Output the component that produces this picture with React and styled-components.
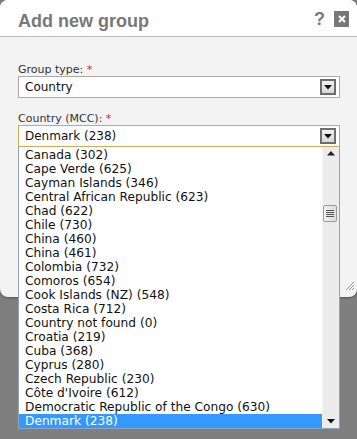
import React from "react";
import styled, { createGlobalStyle } from "styled-components";

const GlobalStyle = createGlobalStyle`
  html, body {
    margin: 0;
    padding: 0;
    background: #7f7f7f;
  }
  body {
    font-family: "DejaVu Sans", Verdana, sans-serif;
  }
`;

const Page = styled.div`
  width: 357px;
  height: 439px;
  overflow: visible;
  background: #7f7f7f;
`;

const Dialog = styled.div`
  position: relative;
  width: 357px;
  height: 297px;
  background: #f3f3f3;
  border-radius: 8px;
  box-shadow: 0 1px 3px rgba(0, 0, 0, 0.35);
`;

const Header = styled.div`
  height: 37px;
  box-sizing: border-box;
  padding: 7px 8px 0 18px;
  background: #fff;
  border-radius: 8px 8px 0 0;
  border-bottom: 1px solid #bcbcbc;
  display: flex;
  align-items: flex-start;
`;

const Title = styled.h1`
  margin: 4px 0 0;
  flex: 1;
  font-family: "Liberation Sans", Arial, sans-serif;
  font-size: 18px;
  line-height: 20px;
  font-weight: bold;
  color: #787878;
`;

const Tools = styled.div`
  display: flex;
  align-items: center;
  gap: 9px;
  padding-top: 4px;
`;

const Help = styled.span`
  font-family: "Liberation Sans", Arial, sans-serif;
  font-weight: bold;
  font-size: 18px;
  line-height: 16px;
  color: #7a7a7a;
`;

const Close = styled.span`
  width: 15px;
  height: 16px;
  background: #777;
  display: flex;
  align-items: center;
  justify-content: center;
`;

const Body = styled.div`
  padding: 27px 17px 0 18px;
`;

const Label = styled.div`
  font-size: 11px;
  line-height: 12px;
  color: #333;
  margin-top: ${(p) => (p.$first ? "0" : "15px")};
`;

const Req = styled.span`
  color: #e8111a;
`;

const Field = styled.div`
  position: relative;
`;

const Select = styled.div`
  height: 22px;
  box-sizing: border-box;
  border: 1px solid ${(p) => (p.$focused ? "#d7a655" : "#a9a9a9")};
  background: #fff;
  display: flex;
  align-items: center;
  padding: 0 3px 0 6px;
  font-size: 12px;
  line-height: 20px;
  color: #111;
`;

const SelectText = styled.span`
  flex: 1;
`;

const DropButton = styled.span`
  width: 16px;
  height: 16px;
  box-sizing: border-box;
  border: 2px solid #6d6d6d;
  background: linear-gradient(#f0f0f0, #d8d8d8);
  display: flex;
  align-items: center;
  justify-content: center;
`;

const ListBox = styled.div`
  position: absolute;
  top: 100%;
  left: 0;
  width: 322px;
  height: 282px;
  box-sizing: border-box;
  border: 1px solid #8ea4bd;
  border-top: none;
  background: #fff;
  display: flex;
  z-index: 5;
`;

const Items = styled.div`
  flex: 1;
  padding-top: 1px;
  overflow: hidden;
`;

const Item = styled.div`
  height: 14px;
  line-height: 14px;
  font-size: 12.2px;
  padding-left: 6px;
  white-space: nowrap;
  color: ${(p) => (p.$selected ? "#fff" : "#111")};
  background: ${(p) => (p.$selected ? "#3399ff" : "transparent")};
`;

const ScrollBar = styled.div`
  position: relative;
  width: 16px;
  background: #ececec;
  border-left: 1px solid #f6f6f6;
  display: flex;
  flex-direction: column;
  align-items: center;
`;

const Arrow = styled.div`
  height: 13px;
  display: flex;
  align-items: center;
  justify-content: center;
`;

const Track = styled.div`
  flex: 1;
  width: 100%;
  position: relative;
`;

const Thumb = styled.div`
  position: absolute;
  top: 45px;
  left: 0;
  width: 14px;
  height: 17px;
  box-sizing: border-box;
  border: 1px solid #9a9a9a;
  border-radius: 2px;
  background: linear-gradient(90deg, #f4f4f4, #dcdcdc);
  display: flex;
  align-items: center;
  justify-content: center;
`;

const Grip = styled.div`
  position: absolute;
  right: 2px;
  bottom: 2px;
`;

const countries = [
  "Canada (302)",
  "Cape Verde (625)",
  "Cayman Islands (346)",
  "Central African Republic (623)",
  "Chad (622)",
  "Chile (730)",
  "China (460)",
  "China (461)",
  "Colombia (732)",
  "Comoros (654)",
  "Cook Islands (NZ) (548)",
  "Costa Rica (712)",
  "Country not found (0)",
  "Croatia (219)",
  "Cuba (368)",
  "Cyprus (280)",
  "Czech Republic (230)",
  "Côte d'Ivoire (612)",
  "Democratic Republic of the Congo (630)",
  "Denmark (238)",
];

function Triangle({ down = true }) {
  return (
    <svg width="8" height="5" viewBox="0 0 8 5">
      {down ? (
        <polygon points="0,0 8,0 4,4.5" fill="#111" />
      ) : (
        <polygon points="0,4.5 8,4.5 4,0" fill="#222" />
      )}
    </svg>
  );
}

export default function App() {
  return (
    <Page>
      <GlobalStyle />
      <Dialog>
        <Header>
          <Title>Add new group</Title>
          <Tools>
            <Help>?</Help>
            <Close>
              <svg width="8" height="8" viewBox="0 0 8 8">
                <path d="M1 1 L7 7 M7 1 L1 7" stroke="#fff" strokeWidth="2" />
              </svg>
            </Close>
          </Tools>
        </Header>
        <Body>
          <Label $first>
            Group type: <Req>*</Req>
          </Label>
          <Field>
            <Select>
              <SelectText>Country</SelectText>
              <DropButton>
                <Triangle />
              </DropButton>
            </Select>
          </Field>
          <Label>
            Country (MCC): <Req>*</Req>
          </Label>
          <Field>
            <Select $focused>
              <SelectText>Denmark (238)</SelectText>
              <DropButton>
                <Triangle />
              </DropButton>
            </Select>
            <ListBox>
              <Items>
                {countries.map((c) => (
                  <Item key={c} $selected={c === "Denmark (238)"}>
                    {c}
                  </Item>
                ))}
              </Items>
              <ScrollBar>
                <Arrow>
                  <Triangle down={false} />
                </Arrow>
                <Track>
                  <Thumb>
                    <svg width="8" height="7" viewBox="0 0 8 7">
                      <path d="M0 0.5 H8 M0 2.5 H8 M0 4.5 H8 M0 6.5 H8" stroke="#555" strokeWidth="1" />
                    </svg>
                  </Thumb>
                </Track>
                <Arrow>
                  <Triangle />
                </Arrow>
              </ScrollBar>
            </ListBox>
          </Field>
        </Body>
        <Grip>
          <svg width="10" height="10" viewBox="0 0 10 10">
            <path d="M1 9 L9 1 M4 9 L9 4 M7 9 L9 7" stroke="#999" strokeWidth="1" />
          </svg>
        </Grip>
      </Dialog>
    </Page>
  );
}
